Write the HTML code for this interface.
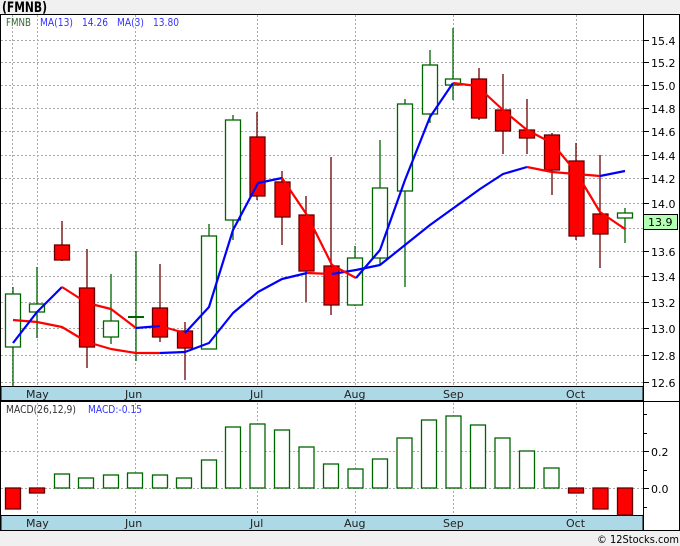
<!DOCTYPE html>
<html><head><meta charset="utf-8"><style>
body{margin:0;width:680px;height:546px;background:#f0f0f0;overflow:hidden;font-family:"DejaVu Sans",sans-serif}
svg{position:absolute;left:0;top:0}
text{font-family:"DejaVu Sans","Liberation Sans",sans-serif;font-size:11px}
</style></head><body>
<svg width="680" height="546" viewBox="0 0 680 546">
<rect x="0" y="0" width="680" height="546" fill="#f0f0f0"/>
<text x="2" y="12" style="font-size:14px;font-weight:bold" fill="#000" textLength="45" lengthAdjust="spacingAndGlyphs">(FMNB)</text>
<rect x="0.5" y="14.5" width="679" height="516" fill="#fff" stroke="#000"/>
<g stroke="#aaa" stroke-dasharray="2,2" stroke-width="1">
<line x1="12.5" y1="15" x2="12.5" y2="386"/><line x1="37.5" y1="15" x2="37.5" y2="515"/><line x1="135.5" y1="15" x2="135.5" y2="515"/><line x1="257.5" y1="15" x2="257.5" y2="515"/><line x1="355.5" y1="15" x2="355.5" y2="515"/><line x1="453.5" y1="15" x2="453.5" y2="515"/><line x1="576.5" y1="15" x2="576.5" y2="515"/>
<line x1="1" y1="40.5" x2="643" y2="40.5"/><line x1="1" y1="62.5" x2="643" y2="62.5"/><line x1="1" y1="85.5" x2="643" y2="85.5"/><line x1="1" y1="108.5" x2="643" y2="108.5"/><line x1="1" y1="131.5" x2="643" y2="131.5"/><line x1="1" y1="155.5" x2="643" y2="155.5"/><line x1="1" y1="178.5" x2="643" y2="178.5"/><line x1="1" y1="203.5" x2="643" y2="203.5"/><line x1="1" y1="228.5" x2="643" y2="228.5"/><line x1="1" y1="251.5" x2="643" y2="251.5"/><line x1="1" y1="276.5" x2="643" y2="276.5"/><line x1="1" y1="302.5" x2="643" y2="302.5"/><line x1="1" y1="328.5" x2="643" y2="328.5"/><line x1="1" y1="355.5" x2="643" y2="355.5"/><line x1="1" y1="382.5" x2="643" y2="382.5"/>
<line x1="1" y1="451.5" x2="643" y2="451.5"/><line x1="1" y1="488.5" x2="643" y2="488.5"/>
</g>
<g style="font-size:11px">
<text x="6" y="26" fill="#336633" textLength="25" lengthAdjust="spacingAndGlyphs">FMNB</text>
<text x="40" y="26" fill="#3333ff" textLength="33" lengthAdjust="spacingAndGlyphs">MA(13)</text>
<text x="82" y="26" fill="#3333ff" textLength="26" lengthAdjust="spacingAndGlyphs">14.26</text>
<text x="117" y="26" fill="#3333ff" textLength="27" lengthAdjust="spacingAndGlyphs">MA(3)</text>
<text x="153" y="26" fill="#3333ff" textLength="26" lengthAdjust="spacingAndGlyphs">13.80</text>
</g>
<g stroke-width="1.3">
<g stroke="#006400" fill="#fff">
<line x1="13" y1="287" x2="13" y2="387"/><rect x="5.5" y="294" width="15" height="53"/>
<line x1="37" y1="267" x2="37" y2="338"/><rect x="29.5" y="304" width="15" height="8"/>
<line x1="111" y1="274" x2="111" y2="344"/><rect x="103.5" y="321" width="15" height="16"/>
<line x1="136" y1="251" x2="136" y2="361"/><line x1="128" y1="317" x2="144" y2="317" stroke-width="2"/>
<line x1="209" y1="224" x2="209" y2="349"/><rect x="201.5" y="236" width="15" height="113"/>
<line x1="233" y1="115" x2="233" y2="240"/><rect x="225.5" y="120" width="15" height="100"/>
<line x1="355" y1="246" x2="355" y2="306"/><rect x="347.5" y="258" width="15" height="47"/>
<line x1="380" y1="140" x2="380" y2="264"/><rect x="372.5" y="188" width="15" height="70"/>
<line x1="405" y1="99" x2="405" y2="287"/><rect x="397.5" y="104" width="15" height="87"/>
<line x1="430" y1="50" x2="430" y2="123"/><rect x="422.5" y="65" width="15" height="49"/>
<line x1="453" y1="28" x2="453" y2="100"/><rect x="445.5" y="79" width="15" height="6"/>
<line x1="625" y1="208" x2="625" y2="243"/><rect x="617.5" y="213" width="15" height="5"/>
</g>
<g stroke="#600" fill="#f00">
<line x1="62" y1="221" x2="62" y2="261"/><rect x="54.5" y="245" width="15" height="15"/>
<line x1="87" y1="249" x2="87" y2="368"/><rect x="79.5" y="288" width="15" height="59"/>
<line x1="160" y1="264" x2="160" y2="342"/><rect x="152.5" y="308" width="15" height="29"/>
<line x1="185" y1="322" x2="185" y2="380"/><rect x="177.5" y="331" width="15" height="17"/>
<line x1="257" y1="112" x2="257" y2="200"/><rect x="250" y="137" width="15" height="59"/>
<line x1="282" y1="171" x2="282" y2="245"/><rect x="275" y="182" width="15" height="35"/>
<line x1="306" y1="196" x2="306" y2="302"/><rect x="299" y="215" width="15" height="56"/>
<line x1="331" y1="157" x2="331" y2="315"/><rect x="324" y="266" width="15" height="39"/>
<line x1="479" y1="68" x2="479" y2="120"/><rect x="471.5" y="79" width="15" height="39"/>
<line x1="503" y1="74" x2="503" y2="154"/><rect x="495.5" y="110" width="15" height="21"/>
<line x1="527" y1="99" x2="527" y2="154"/><rect x="519.5" y="130" width="15" height="8"/>
<line x1="552" y1="133" x2="552" y2="195"/><rect x="544.5" y="135" width="15" height="35"/>
<line x1="576" y1="143" x2="576" y2="240"/><rect x="569" y="161" width="15" height="75"/>
<line x1="600" y1="155" x2="600" y2="268"/><rect x="593" y="214" width="15" height="20"/>
</g>
</g>
<g fill="none" stroke-width="2.2" stroke-linejoin="round">
<polyline stroke="#f00" points="13,320 37,322 62,327 87,342 111,349 136,353 160,353"/>
<polyline stroke="#00f" points="160,353 185,352"/>
<polyline stroke="#00f" points="185,352 209,343 233,313 258,292 282,279 307,273"/>
<polyline stroke="#f00" points="307,273 332,274"/>
<polyline stroke="#00f" points="332,274 356,270 380,265 430,225 480,189 503,174 527,167"/>
<polyline stroke="#f00" points="527,167 552,172 576,174 600,176"/>
<polyline stroke="#00f" points="600,176 625,171"/>
<polyline stroke="#00f" points="13,343 37,312 62,287"/>
<polyline stroke="#f00" points="62,287 87,303 111,309 136,328"/>
<polyline stroke="#00f" points="136,328 160,326"/>
<polyline stroke="#f00" points="160,326 185,333"/>
<polyline stroke="#00f" points="185,333 209,307 233,230 258,183 282,178"/>
<polyline stroke="#f00" points="282,178 307,215 332,265 356,278"/>
<polyline stroke="#00f" points="356,278 380,250 405,180 430,117 453,83"/>
<polyline stroke="#f00" points="453,83 477,86 503,110 527,130 552,143 576,172 600,212 625,229"/>
</g>
<rect x="1" y="386.5" width="642" height="14" fill="#add8e6" stroke="#000"/>
<rect x="1" y="515.5" width="642" height="15" fill="#add8e6" stroke="#000"/>
<g fill="#222" style="font-size:11px">
<text x="26" y="398">May</text><text x="125" y="398">Jun</text><text x="250" y="398">Jul</text><text x="344" y="398">Aug</text><text x="443" y="398">Sep</text><text x="566" y="398">Oct</text>
<text x="26" y="527">May</text><text x="125" y="527">Jun</text><text x="250" y="527">Jul</text><text x="344" y="527">Aug</text><text x="443" y="527">Sep</text><text x="566" y="527">Oct</text>
</g>
<line x1="1" y1="401.5" x2="680" y2="401.5" stroke="#000"/>
<text x="6" y="413" fill="#333" style="font-size:11px" textLength="70" lengthAdjust="spacingAndGlyphs">MACD(26,12,9)</text>
<text x="88" y="413" fill="#3333ff" style="font-size:11px" textLength="54" lengthAdjust="spacingAndGlyphs">MACD:-0.15</text>
<g stroke-width="1.3">
<g stroke="#006400" fill="#fff">
<rect x="54.5" y="474" width="15" height="14"/><rect x="78.5" y="478" width="15" height="10"/><rect x="103.5" y="475" width="15" height="13"/><rect x="127.5" y="473" width="15" height="15"/><rect x="152.5" y="475" width="15" height="13"/><rect x="176.5" y="478" width="15" height="10"/><rect x="201.5" y="460" width="15" height="28"/><rect x="225.5" y="427" width="15" height="61"/><rect x="250" y="424" width="15" height="64"/><rect x="274.5" y="430" width="15" height="58"/><rect x="299" y="447" width="15" height="41"/><rect x="323.5" y="464" width="15" height="24"/><rect x="348" y="469" width="15" height="19"/><rect x="372.5" y="459" width="15" height="29"/><rect x="397" y="438" width="15" height="50"/><rect x="421.5" y="420" width="15" height="68"/><rect x="446" y="416" width="15" height="72"/><rect x="470.5" y="425" width="15" height="63"/><rect x="495" y="438" width="15" height="50"/><rect x="519.5" y="451" width="15" height="37"/><rect x="544" y="468" width="15" height="20"/>
</g>
<g stroke="#600" fill="#f00">
<rect x="5.5" y="488" width="15" height="21"/><rect x="29.5" y="488" width="15" height="5"/><rect x="568.5" y="488" width="15" height="5"/><rect x="593" y="488" width="15" height="21"/><rect x="617.5" y="488" width="15" height="27"/>
</g>
</g>
<line x1="643.5" y1="15" x2="643.5" y2="530" stroke="#000"/>
<g stroke="#000">
<line x1="643" y1="40.5" x2="649" y2="40.5"/><line x1="643" y1="62.5" x2="649" y2="62.5"/><line x1="643" y1="85.5" x2="649" y2="85.5"/><line x1="643" y1="108.5" x2="649" y2="108.5"/><line x1="643" y1="131.5" x2="649" y2="131.5"/><line x1="643" y1="155.5" x2="649" y2="155.5"/><line x1="643" y1="178.5" x2="649" y2="178.5"/><line x1="643" y1="203.5" x2="649" y2="203.5"/><line x1="643" y1="251.5" x2="649" y2="251.5"/><line x1="643" y1="276.5" x2="649" y2="276.5"/><line x1="643" y1="302.5" x2="649" y2="302.5"/><line x1="643" y1="328.5" x2="649" y2="328.5"/><line x1="643" y1="355.5" x2="649" y2="355.5"/><line x1="643" y1="382.5" x2="649" y2="382.5"/>
<line x1="643" y1="451.5" x2="649" y2="451.5"/><line x1="643" y1="488.5" x2="649" y2="488.5"/><line x1="643" y1="414.5" x2="647" y2="414.5"/><line x1="643" y1="470.5" x2="647" y2="470.5"/><line x1="643" y1="507.5" x2="647" y2="507.5"/><line x1="643" y1="433.5" x2="647" y2="433.5"/>
</g>
<g fill="#000" style="font-size:11px">
<text x="651" y="45">15.4</text><text x="651" y="67">15.2</text><text x="651" y="90">15.0</text><text x="651" y="113">14.8</text><text x="651" y="136">14.6</text><text x="651" y="160">14.4</text><text x="651" y="183">14.2</text><text x="651" y="208">14.0</text><text x="651" y="256">13.6</text><text x="651" y="281">13.4</text><text x="651" y="307">13.2</text><text x="651" y="333">13.0</text><text x="651" y="360">12.8</text><text x="651" y="387">12.6</text>
<text x="651" y="456">0.2</text><text x="651" y="493">0.0</text>
</g>
<rect x="643.5" y="214.5" width="34" height="15" fill="#b3ffb3" stroke="#000"/>
<text x="648" y="226" style="font-size:11px" fill="#000">13.9</text>
<text x="597" y="543" style="font-size:11px" fill="#000" textLength="82" lengthAdjust="spacingAndGlyphs">© 12Stocks.com</text>
</svg>
</body></html>
